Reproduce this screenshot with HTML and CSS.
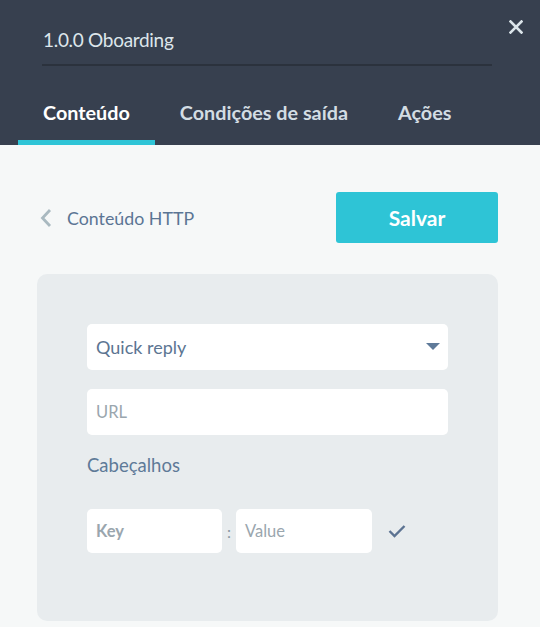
FILE: index.html
```html
<!DOCTYPE html>
<html lang="pt">
<head>
<meta charset="utf-8">
<title>1.0.0 Oboarding</title>
<link rel="stylesheet" href="styles.css">
</head>
<body>
<div class="panel">
  <header class="header">
    <div class="title-row">
      <div class="title">1.0.0 Oboarding</div>
      <button class="close" aria-label="Fechar">
        <svg width="14" height="14" viewBox="0 0 14 14"><path d="M1.5 1.5 L12.5 12.5 M12.5 1.5 L1.5 12.5" stroke="#dbe5ea" stroke-width="2.6" stroke-linecap="square"/></svg>
      </button>
    </div>
    <nav class="tabs">
      <div class="tab active">Conteúdo</div>
      <div class="tab">Condições de saída</div>
      <div class="tab">Ações</div>
    </nav>
  </header>
  <main class="content">
    <div class="toolbar">
      <div class="back">
        <svg class="chev" width="12" height="20" viewBox="0 0 12 20"><path d="M10 2 L2.5 10 L10 18" fill="none" stroke="#a9b9c0" stroke-width="2.8"/></svg>
        <span>Conteúdo HTTP</span>
      </div>
      <button class="save">Salvar</button>
    </div>
    <section class="card">
      <div class="field select">
        <span class="value">Quick reply</span>
        <svg width="14" height="8" viewBox="0 0 14 8"><path d="M0 0 H14 L7 7 Z" fill="#5f7a99"/></svg>
      </div>
      <div class="field"><span class="placeholder">URL</span></div>
      <div class="label">Cabeçalhos</div>
      <div class="kv">
        <div class="field key"><span class="placeholder bold">Key</span></div>
        <span class="colon">:</span>
        <div class="field val"><span class="placeholder">Value</span></div>
        <svg class="check" width="18" height="14" viewBox="0 0 18 14"><path d="M1.5 7 L6.5 12 L16.5 2" fill="none" stroke="#5c7392" stroke-width="2.4"/></svg>
      </div>
    </section>
  </main>
</div>
</body>
</html>
```

FILE: styles.css
```css
* { box-sizing: border-box; }
html, body { margin: 0; padding: 0; }
body {
  font-family: Lato, "Noto Sans", sans-serif;
  background: #f6f8f8;
  width: 540px;
  height: 627px;
  overflow: hidden;
}
.header {
  background: #37404f;
  height: 145px;
  display: flex;
  flex-direction: column;
}
.title-row {
  display: flex;
  align-items: flex-start;
  padding: 0 0 0 42px;
  height: 90px;
}
.title {
  margin-top: 27px;
  width: 450px;
  height: 39px;
  border-bottom: 2px solid #2b323d;
  color: #dde6eb;
  font-size: 19px;
  padding-left: 1px;
  line-height: 26px;
  letter-spacing: -0.3px;
}
.close {
  margin: 20px 0 0 17px;
  width: 14px;
  height: 14px;
  padding: 0;
  background: none;
  border: 0;
  display: flex;
}
.tabs {
  display: flex;
  padding-left: 18px;
  height: 55px;
}
.tab {
  padding: 0 25px;
  color: #d3dde3;
  font-size: 19.8px;
  font-weight: 700;
  line-height: 44px;
  border-bottom: 5px solid transparent;
  height: 55px;
}
.tab.active {
  color: #ffffff;
  border-bottom-color: #2ec4d6;
}
.content {
  padding: 47px 42px 0 37px;
}
.toolbar {
  display: flex;
  justify-content: space-between;
  align-items: center;
  height: 51px;
}
.back {
  display: flex;
  align-items: center;
  color: #5b7594;
  font-size: 17.8px;
  padding-left: 3px;
}
.chev { margin-right: 15px; }
.save {
  width: 162px;
  height: 51px;
  background: #2ec4d6;
  border: 0;
  border-radius: 3px;
  color: #fff;
  font-family: inherit;
  font-size: 21px;
  font-weight: 700;
}
.card {
  margin-top: 31px;
  background: #e8ecee;
  border-radius: 10px;
  height: 347px;
  width: 461px;
  padding: 50px 50px 0 50px;
}
.field {
  background: #fff;
  border-radius: 5px;
  height: 46px;
  display: flex;
  align-items: center;
  padding: 0 8px 0 9px;
  font-size: 18px;
  margin-bottom: 19px;
}
.select { justify-content: space-between; }
.select .value { color: #5c7592; }
.placeholder { color: #9aa6ae; font-size: 16.5px; }
.placeholder.bold { font-weight: 700; }
.label {
  color: #5e7a98;
  font-size: 18.5px;
  margin-top: 15px;
  height: 22px;
  line-height: 22px;
}
.kv {
  display: flex;
  align-items: center;
  margin-top: 33px;
}
.kv .field { height: 44px; margin-bottom: 0; }
.key { width: 135px; }
.val { width: 136px; }
.colon {
  width: 14px;
  text-align: center;
  color: #8a98a3;
  font-size: 16px;
}
.check { margin-left: 16px; }
```
